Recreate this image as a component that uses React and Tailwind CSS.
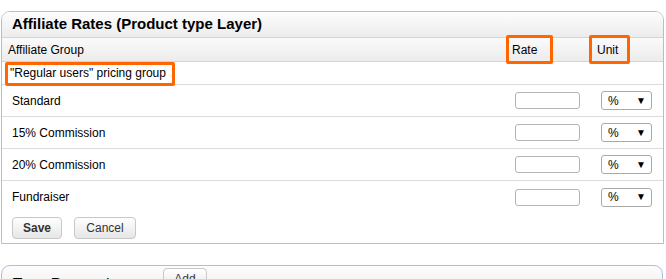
const rows = ["Standard", "15% Commission", "20% Commission", "Fundraiser"];

function UnitSelect() {
  return (
    <div className="w-[51px] h-[19px] border border-[#a9a9a9] rounded-[3px] bg-white flex items-center justify-between pl-[6px] pr-[5px] text-[12px] text-black">
      <span>%</span>
      <span className="text-[10px] leading-none">▼</span>
    </div>
  );
}

function Btn({ children, className = "" }) {
  return (
    <button
      className={`h-[22px] border border-[#c8c8c8] rounded-[4px] bg-gradient-to-b from-[#ffffff] to-[#e6e6e6] text-[12px] font-bold text-[#333] ${className}`}
    >
      {children}
    </button>
  );
}

export default function App() {
  return (
    <div
      className="w-[666px] h-[279px] bg-white overflow-hidden pt-[11px] pl-px"
      style={{ fontFamily: '"Liberation Sans", Arial, sans-serif' }}
    >
      {/* Affiliate rates panel */}
      <div className="w-[663px] border border-[#a9c1dc] rounded-t-[9px] overflow-hidden">
        <div className="h-[25px] bg-gradient-to-b from-[#fdfdfd] to-[#ececec] flex items-center pl-[10px] text-[15px] font-bold text-black">
          Affiliate Rates (Product type Layer)
        </div>
        <div className="h-[25px] border-t border-b border-[#d4d4d4] bg-gradient-to-b from-[#fafafa] to-[#ececec] flex items-center text-[12px] text-black">
          <div className="flex-1 pl-[6px]">Affiliate Group</div>
          <div className="w-[83px] h-full relative flex items-center pl-[6px]">
            <div className="absolute left-0 top-[-3px] w-[47px] h-[29px] border-[3px] border-[#ff6600] rounded-[2px]" />
            <span className="relative">Rate</span>
          </div>
          <div className="w-[74px] h-full relative flex items-center pl-[8px]">
            <div className="absolute left-0 top-[-3px] w-[41px] h-[29px] border-[3px] border-[#ff6600] rounded-[2px]" />
            <span className="relative">Unit</span>
          </div>
        </div>
        <div className="h-[23px] border-b border-[#dcdcdc] flex items-center pl-[8px] text-[12px] text-black relative">
          <div className="absolute left-[3px] top-0 w-[170px] h-[24px] border-[3px] border-[#ff6600] rounded-[2px]" />
          <span className="relative">"Regular users" pricing group</span>
        </div>
        {rows.map((r, i) => (
          <div
            key={r}
            className={`h-[32px] flex items-center text-[12px] text-black ${i < rows.length - 1 ? "border-b border-[#dcdcdc]" : ""}`}
          >
            <div className="flex-1 pl-[10px]">{r}</div>
            <div className="w-[83px] pl-[9px]">
              <div className="w-[65px] h-[17px] border border-[#b4b4b4] rounded-[3px] bg-white" />
            </div>
            <div className="w-[74px] pl-[12px]">
              <UnitSelect />
            </div>
          </div>
        ))}
        <div className="flex gap-[12px] pl-[10px] pt-[4px] pb-[4px]">
          <Btn className="w-[50px]">Save</Btn>
          <Btn className="w-[62px] font-normal">Cancel</Btn>
        </div>
      </div>

      {/* Type parameters panel */}
      <div className="mt-[21px] w-[662px] h-[30px] border border-[#a9c1dc] rounded-t-[9px] bg-gradient-to-b from-[#fdfdfd] to-[#ececec] flex items-start pl-[11px] pt-[6px]">
        <span className="text-[15px] font-bold text-black w-[150px]">Type Parameters</span>
        <Btn className="w-[44px] font-normal -mt-[4px]">Add</Btn>
      </div>
    </div>
  );
}
